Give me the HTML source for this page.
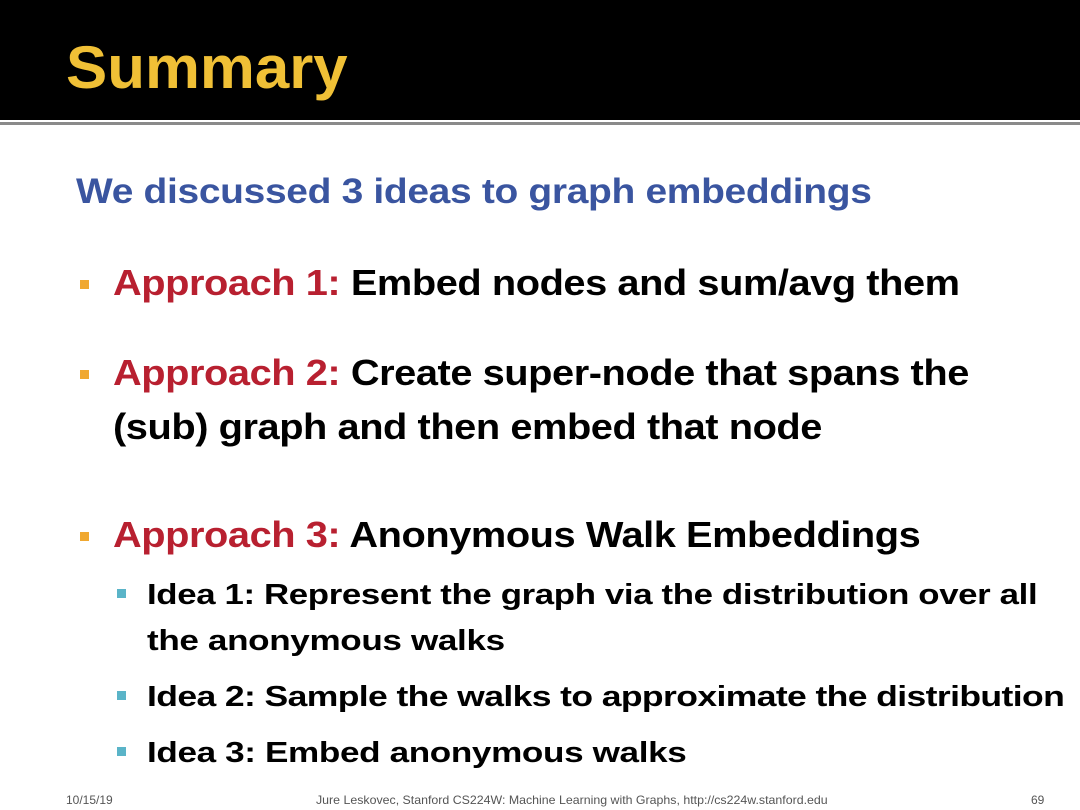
<!DOCTYPE html>
<html><head><meta charset="utf-8"><style>
body{margin:0;width:1080px;height:810px;background:#fff;position:relative;overflow:hidden;font-family:"Liberation Sans",sans-serif}
.hdr{position:absolute;left:0;top:0;width:1080px;height:120px;background:#000}
.l1{position:absolute;left:0;top:122px;width:1080px;height:3px;background:#8a8a8a}
.t{position:absolute;white-space:nowrap;font-weight:bold;line-height:1;transform-origin:0 0}
.a{transform:scaleX(1.105)}
.s{transform:scaleX(1.21)}
.sq{position:absolute;width:9px;height:9px}
.f{position:absolute;top:793px;font-size:12px;color:#555;white-space:nowrap}
</style></head><body>
<div class="hdr"></div><div class="l1"></div>
<div class="t" style="left:66px;top:38px;font-size:60px;color:#f0c036;transform:scaleX(1.03)">Summary</div>
<div class="t" style="left:76px;top:174px;font-size:35px;color:#3a55a0;letter-spacing:-0.3px;transform:scaleX(1.113)">We discussed 3 ideas to graph embeddings</div>

<div class="sq" style="left:80px;top:280px;background:#f0a830"></div>
<div class="t a" style="left:113px;top:265px;font-size:36px;color:#000;letter-spacing:-0.4px"><span style="color:#b82030">Approach 1:</span> Embed nodes and sum/avg them</div>

<div class="sq" style="left:80px;top:370px;background:#f0a830"></div>
<div class="t a" style="left:113px;top:355px;font-size:36px;color:#000;letter-spacing:-0.4px"><span style="color:#b82030">Approach 2:</span> Create super-node that spans the</div>
<div class="t a" style="left:113px;top:409px;font-size:36px;color:#000;letter-spacing:-0.4px">(sub) graph and then embed that node</div>

<div class="sq" style="left:80px;top:532px;background:#f0a830"></div>
<div class="t a" style="left:113px;top:517px;font-size:36px;color:#000;letter-spacing:-0.4px"><span style="color:#b82030">Approach 3:</span> Anonymous Walk Embeddings</div>

<div class="sq" style="left:117px;top:589px;background:#5ab4c8"></div>
<div class="t" style="left:147px;top:581px;font-size:29px;color:#000;letter-spacing:-0.3px;transform:scaleX(1.2)">Idea 1: Represent the graph via the distribution over all</div>
<div class="t s" style="left:147px;top:627px;font-size:29px;color:#000;letter-spacing:-0.3px">the anonymous walks</div>
<div class="sq" style="left:117px;top:691px;background:#5ab4c8"></div>
<div class="t" style="left:147px;top:683px;font-size:29px;color:#000;letter-spacing:-0.5px;transform:scaleX(1.225)">Idea 2: Sample the walks to approximate the distribution</div>
<div class="sq" style="left:117px;top:747px;background:#5ab4c8"></div>
<div class="t s" style="left:147px;top:739px;font-size:29px;color:#000;letter-spacing:-0.3px">Idea 3: Embed anonymous walks</div>

<div class="f" style="left:66px">10/15/19</div>
<div class="f" style="left:316px;transform:scaleX(1.03);transform-origin:0 0">Jure Leskovec, Stanford CS224W: Machine Learning with Graphs, http://cs224w.stanford.edu</div>
<div class="f" style="left:1031px">69</div>
</body></html>
